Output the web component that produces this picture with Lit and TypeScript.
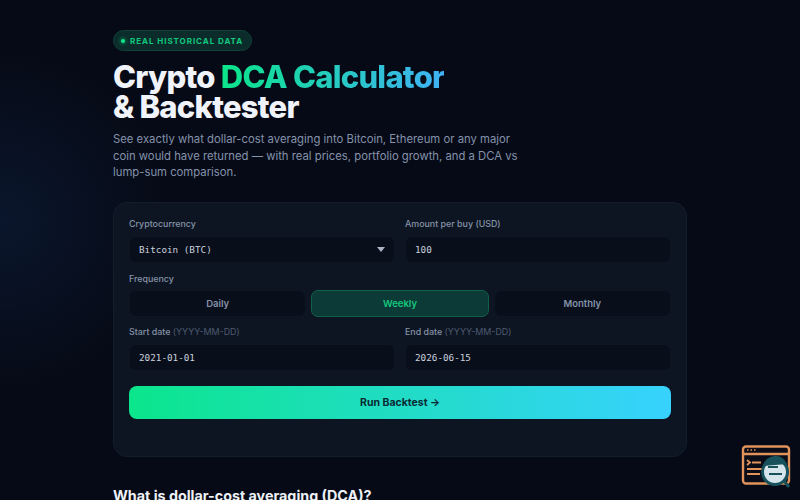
import { LitElement, html, css } from "lit";
import { customElement } from "lit/decorators.js";

@customElement("app-root")
export class AppRoot extends LitElement {
  static styles = css`
    :host {
      display: block;
      width: 800px;
      height: 500px;
      overflow: hidden;
      position: relative;
      font-family: Inter, "Noto Sans", sans-serif;
      background:
        radial-gradient(circle at 0px 220px, rgba(18, 44, 84, 0.36), rgba(18, 44, 84, 0) 170px),
        #060a16;
      color: #e8edf5;
    }
    .wrap { width: 574px; margin: 0 auto; padding-top: 30px; }
    .badge {
      display: flex; align-items: center; gap: 5px; width: fit-content;
      height: 21px; box-sizing: border-box; padding: 0 8px 0 7px;
      border-radius: 11px; background: #0b2c2a; border: 1px solid #0f4238;
      color: #12c77f; font-size: 8px; font-weight: 700; letter-spacing: 0.95px;
    }
    .dot { width: 4px; height: 4px; border-radius: 50%; background: #0de58a; box-shadow: 0 0 4px #0de58a; }
    h1 { margin: 11px 0 0; font-size: 31px; line-height: 30px; font-weight: 800; letter-spacing: -0.75px; color: #f0f3fa; }
    .grad {
      background: linear-gradient(90deg, #0be58a, #3fb2f5);
      -webkit-background-clip: text; background-clip: text; color: transparent;
    }
    .lead { margin: 9px 0 0; width: 410px; font-size: 11.3px; line-height: 16.5px; color: #8492ab; }
    .card {
      margin-top: 21px; height: 255px; box-sizing: border-box; padding: 15px;
      border-radius: 14px; background: #0d1522; border: 1px solid #131d2b;
    }
    .row { display: grid; grid-template-columns: 1fr 1fr; gap: 10px; }
    .field label, .lab { display: block; font-size: 8.9px; line-height: 12px; color: #8693a8; font-weight: 500; }
    .hint { color: #4d5a70; font-weight: 400; }
    .input {
      margin-top: 6px; height: 27px; box-sizing: border-box; padding: 0 9px;
      display: flex; align-items: center; justify-content: space-between;
      border-radius: 7px; background: #090e1b; border: 1px solid #0e1624;
      font-family: "DejaVu Sans Mono", monospace; font-size: 9.3px; color: #c9d1de;
    }
    .caret { width: 0; height: 0; border-left: 4px solid transparent; border-right: 4px solid transparent; border-top: 5px solid #aab4c4; }
    .lab { margin-top: 10px; }
    .seg { margin-top: 5px; display: grid; grid-template-columns: repeat(3, 1fr); gap: 5px; }
    .seg div {
      height: 25px; display: flex; align-items: center; justify-content: center;
      border-radius: 7px; background: #090e1b; border: 1px solid #0e1624;
      font-size: 9.5px; font-weight: 600; color: #8592a8;
    }
    .seg .on { background: #0c3a36; border-color: #136049; color: #14c87e; }
    .dates { margin-top: 9px; }
    .run {
      margin-top: 15px; height: 33px; display: flex; align-items: center; justify-content: center;
      border-radius: 8px; background: linear-gradient(90deg, #0be68c, #37d2fe);
      color: #0a2a33; font-size: 10.5px; font-weight: 700;
    }
    h2 { margin: 30px 0 0; font-size: 14.3px; line-height: 18px; font-weight: 700; color: #eef1f7; }
    .logo { position: absolute; left: 741px; top: 445px; }
  `;
  render() {
    return html`
      <div class="wrap">
        <div class="badge"><span class="dot"></span>REAL HISTORICAL DATA</div>
        <h1>Crypto <span class="grad">DCA Calculator</span><br />&amp; Backtester</h1>
        <p class="lead">See exactly what dollar-cost averaging into Bitcoin, Ethereum or any major coin would have returned — with real prices, portfolio growth, and a DCA vs lump-sum comparison.</p>
        <div class="card">
          <div class="row">
            <div class="field"><label>Cryptocurrency</label><div class="input">Bitcoin (BTC)<span class="caret"></span></div></div>
            <div class="field"><label>Amount per buy (USD)</label><div class="input">100</div></div>
          </div>
          <div class="lab">Frequency</div>
          <div class="seg"><div>Daily</div><div class="on">Weekly</div><div>Monthly</div></div>
          <div class="row dates">
            <div class="field"><label>Start date <span class="hint">(YYYY-MM-DD)</span></label><div class="input">2021-01-01</div></div>
            <div class="field"><label>End date <span class="hint">(YYYY-MM-DD)</span></label><div class="input">2026-06-15</div></div>
          </div>
          <div class="run">Run Backtest →</div>
        </div>
        <h2>What is dollar-cost averaging (DCA)?</h2>
      </div>
      <svg class="logo" width="50" height="44" viewBox="0 0 50 44" fill="none">
        <rect x="2" y="1.5" width="46" height="37" rx="3" stroke="#e0935a" stroke-width="2.4" fill="#0a0d18"/>
        <path d="M2 9h46" stroke="#e0935a" stroke-width="2.4"/>
        <path d="M6 5h1.5M9.5 5H11M13 5h1.5" stroke="#e0935a" stroke-width="1.4"/>
        <path d="M6 15l3 2.5-3 2.5M11 17.5h9M6 24h15M6 29h13" stroke="#e0935a" stroke-width="1.8"/>
        <circle cx="34" cy="27" r="12.5" fill="#d6e4ec" stroke="#17525c" stroke-width="3"/>
        <path d="M22 24a12.5 12.5 0 0 1 24 -2 z" fill="#17525c" transform="translate(0 -3)"/>
        <path d="M27 22h10M28 29h13" stroke="#17525c" stroke-width="2"/>
        <path d="M43 36l5 6" stroke="#17525c" stroke-width="3"/>
      </svg>
    `;
  }
}
